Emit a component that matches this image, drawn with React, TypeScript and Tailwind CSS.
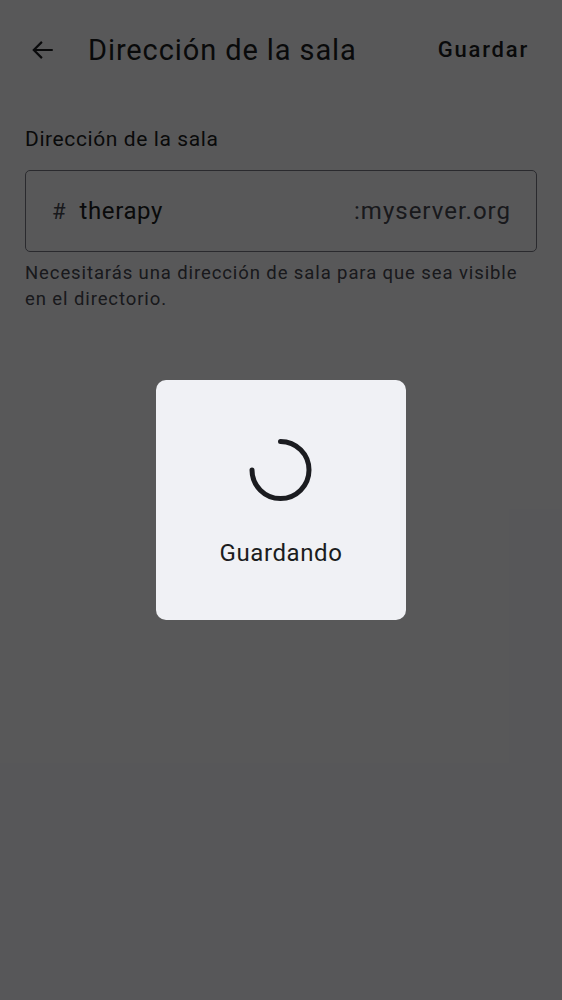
import React from 'react';

export default function App() {
  return (
    <div className="relative min-h-[1000px] w-full bg-[#f3f3f7] font-['Roboto',sans-serif] text-[#1b1c20]">
      {/* cabecera */}
      <div className="flex h-[100px] items-center pl-[30px] pr-[33px]">
        <svg className="h-[26px] w-[26px]" viewBox="0 0 24 24" fill="none" stroke="currentColor" strokeWidth="2">
          <path d="M21 12H3.5M11 4.5 3.5 12l7.5 7.5" />
        </svg>
        <h1 className="ml-[32px] flex-1 text-[29px] leading-none tracking-[0.9px]">Dirección de la sala</h1>
        <button className="text-[22px] font-medium leading-none tracking-[1.8px]">Guardar</button>
      </div>

      <div className="px-[25px] pt-[29px]">
        <div className="text-[21px] leading-none tracking-[0.6px]">Dirección de la sala</div>
        <div className="mt-[20px] flex h-[82px] items-center rounded-[5px] border border-[#74757f] pl-[26px] pr-[25px]">
          <span className="text-[22px] text-[#45464f]">#</span>
          <span className="ml-[14px] flex-1 text-[24px] tracking-[0.6px]">therapy</span>
          <span className="text-[24px] tracking-[1px] text-[#45464f]">:myserver.org</span>
        </div>
        <p className="mt-[8px] text-[18.5px] leading-[26px] tracking-[0.9px] text-[#45464f]">
          Necesitarás una dirección de sala para que sea visible en el directorio.
        </p>
      </div>

      {/* capa oscura + diálogo */}
      <div className="absolute inset-0 bg-black/[0.64]">
        <div className="ml-[156px] mt-[380px] flex h-[240px] w-[250px] flex-col items-center rounded-[10px] bg-[#f0f1f5]">
          <svg className="mt-[58px] h-[64px] w-[64px]" viewBox="0 0 64 64" fill="none">
            <path d="M32 3.5 A28.5 28.5 0 1 1 3.5 32" stroke="#1b1c20" strokeWidth="5" strokeLinecap="round" transform="translate(-0.5,0)" />
          </svg>
          <div className="mt-[39px] text-[24px] leading-none tracking-[0.6px]">Guardando</div>
        </div>
      </div>
    </div>
  );
}
